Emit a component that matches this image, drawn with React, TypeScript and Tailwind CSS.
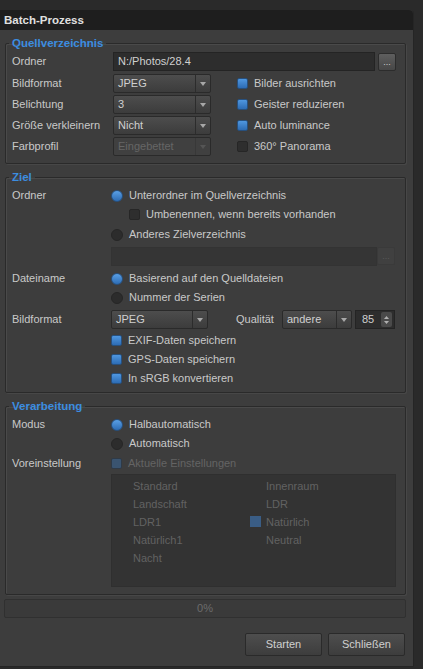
import React from "react";

const font = { fontFamily: '"Liberation Sans", Arial, sans-serif' };

function Legend({ children }: { children: React.ReactNode }) {
  return (
    <legend className="ml-[3px] px-[3px] text-[11.5px] leading-[14px] font-bold text-[#3c8de0]">
      {children}
    </legend>
  );
}

function Select({
  value,
  width,
  disabled,
}: {
  value: string;
  width: string;
  disabled?: boolean;
}) {
  return (
    <div
      className={`flex h-[19px] ${width} border border-[#2a2a2a] rounded-[2px] ${
        disabled
          ? "bg-[#404040] text-[#666666]"
          : "bg-gradient-to-b from-[#4d4d4d] to-[#3c3c3c] text-[#d0d0d0]"
      }`}
    >
      <span className="flex-1 pl-[4px] leading-[17px]">{value}</span>
      <span
        className={`flex w-[15px] items-center justify-center border-l ${
          disabled ? "border-[#383838]" : "border-[#2c2c2c]"
        }`}
      >
        <svg width="6" height="4" viewBox="0 0 6 4">
          <path d="M0 0h6L3 4z" fill={disabled ? "#555" : "#a8a8a8"} />
        </svg>
      </span>
    </div>
  );
}

function Check({
  checked,
  disabled,
  label,
}: {
  checked?: boolean;
  disabled?: boolean;
  label: string;
}) {
  return (
    <div className="flex h-[19px] items-center gap-[6px]">
      <span
        className={`h-[11px] w-[11px] rounded-[2px] border ${
          checked
            ? disabled
              ? "border-[#2f3a46] bg-[#3a5470]"
              : "border-[#27507e] bg-gradient-to-b from-[#4f97e0] to-[#2d6cb4]"
            : "border-[#262626] bg-[#2e2e2e]"
        }`}
      />
      <span className={disabled ? "text-[#646464]" : "text-[#c9c9c9]"}>{label}</span>
    </div>
  );
}

function Radio({ checked, label }: { checked?: boolean; label: string }) {
  return (
    <div className="flex h-[19px] items-center gap-[6px]">
      <span
        className={`h-[12px] w-[12px] rounded-full border ${
          checked
            ? "border-[#27507e] bg-gradient-to-b from-[#5aa0e6] to-[#2d6cb4]"
            : "border-[#262626] bg-[#2c2c2c]"
        }`}
      />
      <span className="text-[#c9c9c9]">{label}</span>
    </div>
  );
}

function DotsButton({ disabled }: { disabled?: boolean }) {
  return (
    <div
      className={`flex h-[18px] w-[18px] items-end justify-center pb-[3px] rounded-[2px] border text-[9px] leading-none ${
        disabled
          ? "border-[#3a3a3a] bg-[#404040] text-[#5a5a5a]"
          : "border-[#2c2c2c] bg-gradient-to-b from-[#5e5e5e] to-[#474747] text-[#d0d0d0]"
      }`}
    >
      ...
    </div>
  );
}

const box =
  "ml-[5px] w-[401px] border border-[#2a2a2a] shadow-[inset_1px_1px_0_#4a4a4a,1px_1px_0_#474747] rounded-[2px] px-0";

const label = "text-[#c9c9c9]";

export default function App() {
  return (
    <div className="min-h-[669px] w-[423px] bg-[#2a2a2a] pt-[10px] text-[11px]" style={font}>
      <div className="w-[414px] rounded-tr-[4px] bg-[#3d3d3d] border-r border-b border-[#252525] pb-[10px]">
        <div className="h-[20px] rounded-tr-[4px] bg-[#1e1e1e] pl-[4px] text-[11.5px] font-bold leading-[20px] text-[#e0e0e0]">
          Batch-Prozess
        </div>

        {/* Quellverzeichnis */}
        <fieldset className={`${box} mt-[6px] pb-[7px] pt-[2px]`}>
          <Legend>Quellverzeichnis</Legend>
          <div className="pl-[6px]">
            <div className="flex h-[19px] items-center">
              <span className={`w-[101px] ${label}`}>Ordner</span>
              <div className="h-[19px] w-[262px] border border-[#242424] bg-[#2d2d2d] pl-[4px] leading-[17px] text-[#d0d0d0]">
                N:/Photos/28.4
              </div>
              <div className="ml-[3px]">
                <DotsButton />
              </div>
            </div>
            <div className="mt-[3px] flex">
              <div className="flex flex-col gap-[2px]">
                {[
                  ["Bildformat", "JPEG"],
                  ["Belichtung", "3"],
                  ["Größe verkleinern", "Nicht"],
                ].map(([l, v]) => (
                  <div key={l} className="flex h-[19px] items-center">
                    <span className={`w-[101px] ${label}`}>{l}</span>
                    <Select value={v} width="w-[98px]" />
                  </div>
                ))}
                <div className="flex h-[19px] items-center">
                  <span className={`w-[101px] ${label}`}>Farbprofil</span>
                  <Select value="Eingebettet" width="w-[98px]" disabled />
                </div>
              </div>
              <div className="ml-[26px] flex flex-col gap-[2px]">
                <Check checked label="Bilder ausrichten" />
                <Check checked label="Geister reduzieren" />
                <Check checked label="Auto luminance" />
                <Check label="360° Panorama" />
              </div>
            </div>
          </div>
        </fieldset>

        {/* Ziel */}
        <fieldset className={`${box} mt-[6px] pb-[4px] pt-[2px]`}>
          <Legend>Ziel</Legend>
          <div className="pl-[6px]">
            <div className="flex">
              <span className={`w-[99px] leading-[19px] ${label}`}>Ordner</span>
              <div className="flex flex-col">
                <Radio checked label="Unterordner im Quellverzeichnis" />
                <div className="ml-[18px]">
                  <Check label="Umbenennen, wenn bereits vorhanden" />
                </div>
                <div className="mt-[1px]">
                  <Radio label="Anderes Zielverzeichnis" />
                </div>
                <div className="mt-[3px] flex">
                  <div className="h-[19px] w-[266px] border border-[#333333] bg-[#353535]" />
                  <DotsButton disabled />
                </div>
              </div>
            </div>
            <div className="mt-[3px] flex">
              <span className={`w-[99px] leading-[19px] ${label}`}>Dateiname</span>
              <div className="flex flex-col">
                <Radio checked label="Basierend auf den Quelldateien" />
                <Radio label="Nummer der Serien" />
              </div>
            </div>
            <div className="mt-[3px] flex h-[19px] items-center">
              <span className={`w-[99px] ${label}`}>Bildformat</span>
              <Select value="JPEG" width="w-[97px]" />
              <span className={`ml-[28px] w-[46px] ${label}`}>Qualität</span>
              <Select value="andere" width="w-[70px]" />
              <div className="ml-[3px] flex h-[19px] w-[40px] items-center border border-[#242424] bg-[#2d2d2d] text-[#d0d0d0]">
                <span className="flex-1 pl-[6px] leading-[17px]">85</span>
                <span className="mr-[2px] flex h-[15px] w-[11px] flex-col items-center justify-center gap-[2px] rounded-[2px] bg-[#4a4a4a]">
                  <svg width="5" height="3" viewBox="0 0 5 3">
                    <path d="M0 3h5L2.5 0z" fill="#b0b0b0" />
                  </svg>
                  <svg width="5" height="3" viewBox="0 0 5 3">
                    <path d="M0 0h5L2.5 3z" fill="#b0b0b0" />
                  </svg>
                </span>
              </div>
            </div>
            <div className="ml-[99px] mt-[2px] flex flex-col">
              <Check checked label="EXIF-Daten speichern" />
              <Check checked label="GPS-Daten speichern" />
              <Check checked label="In sRGB konvertieren" />
            </div>
          </div>
        </fieldset>

        {/* Verarbeitung */}
        <fieldset className={`${box} mt-[6px] pb-[7px] pt-[2px]`}>
          <Legend>Verarbeitung</Legend>
          <div className="pl-[6px]">
            <div className="flex">
              <span className={`w-[99px] leading-[19px] ${label}`}>Modus</span>
              <div className="flex flex-col">
                <Radio checked label="Halbautomatisch" />
                <Radio label="Automatisch" />
              </div>
            </div>
            <div className="mt-[1px] flex">
              <span className={`w-[99px] leading-[19px] ${label}`}>Voreinstellung</span>
              <div className="flex flex-col">
                <Check checked disabled label="Aktuelle Einstellungen" />
                <div className="mt-[1px] grid h-[113px] w-[285px] grid-cols-[133px_1fr] content-start border border-[#2f2f2f] bg-[#333333] pt-[2px] pl-[21px] text-[#626262]">
                  <div className="flex flex-col">
                    {["Standard", "Landschaft", "LDR1", "Natürlich1", "Nacht"].map((t) => (
                      <span key={t} className="leading-[18px]">
                        {t}
                      </span>
                    ))}
                  </div>
                  <div className="flex flex-col">
                    <span className="leading-[18px]">Innenraum</span>
                    <span className="leading-[18px]">LDR</span>
                    <span className="relative leading-[18px]">
                      <span className="absolute left-[-16px] top-[3px] h-[11px] w-[11px] bg-[#3a5d85]" />
                      Natürlich
                    </span>
                    <span className="leading-[18px]">Neutral</span>
                  </div>
                </div>
              </div>
            </div>
          </div>
        </fieldset>

        {/* progress */}
        <div className="ml-[4px] mt-[4px] h-[19px] w-[402px] rounded-[2px] border border-[#303030] bg-[#3a3a3a] text-center leading-[17px] text-[#6c6c6c]">
          0%
        </div>

        <div className="mt-[15px] flex justify-end gap-[6px] pr-[8px]">
          {["Starten", "Schließen"].map((t) => (
            <button
              key={t}
              className="h-[23px] w-[77px] rounded-[2px] border border-[#2a2a2a] bg-gradient-to-b from-[#4e4e4e] to-[#3d3d3d] text-[11px] text-[#d0d0d0]"
            >
              {t}
            </button>
          ))}
        </div>
      </div>
    </div>
  );
}
